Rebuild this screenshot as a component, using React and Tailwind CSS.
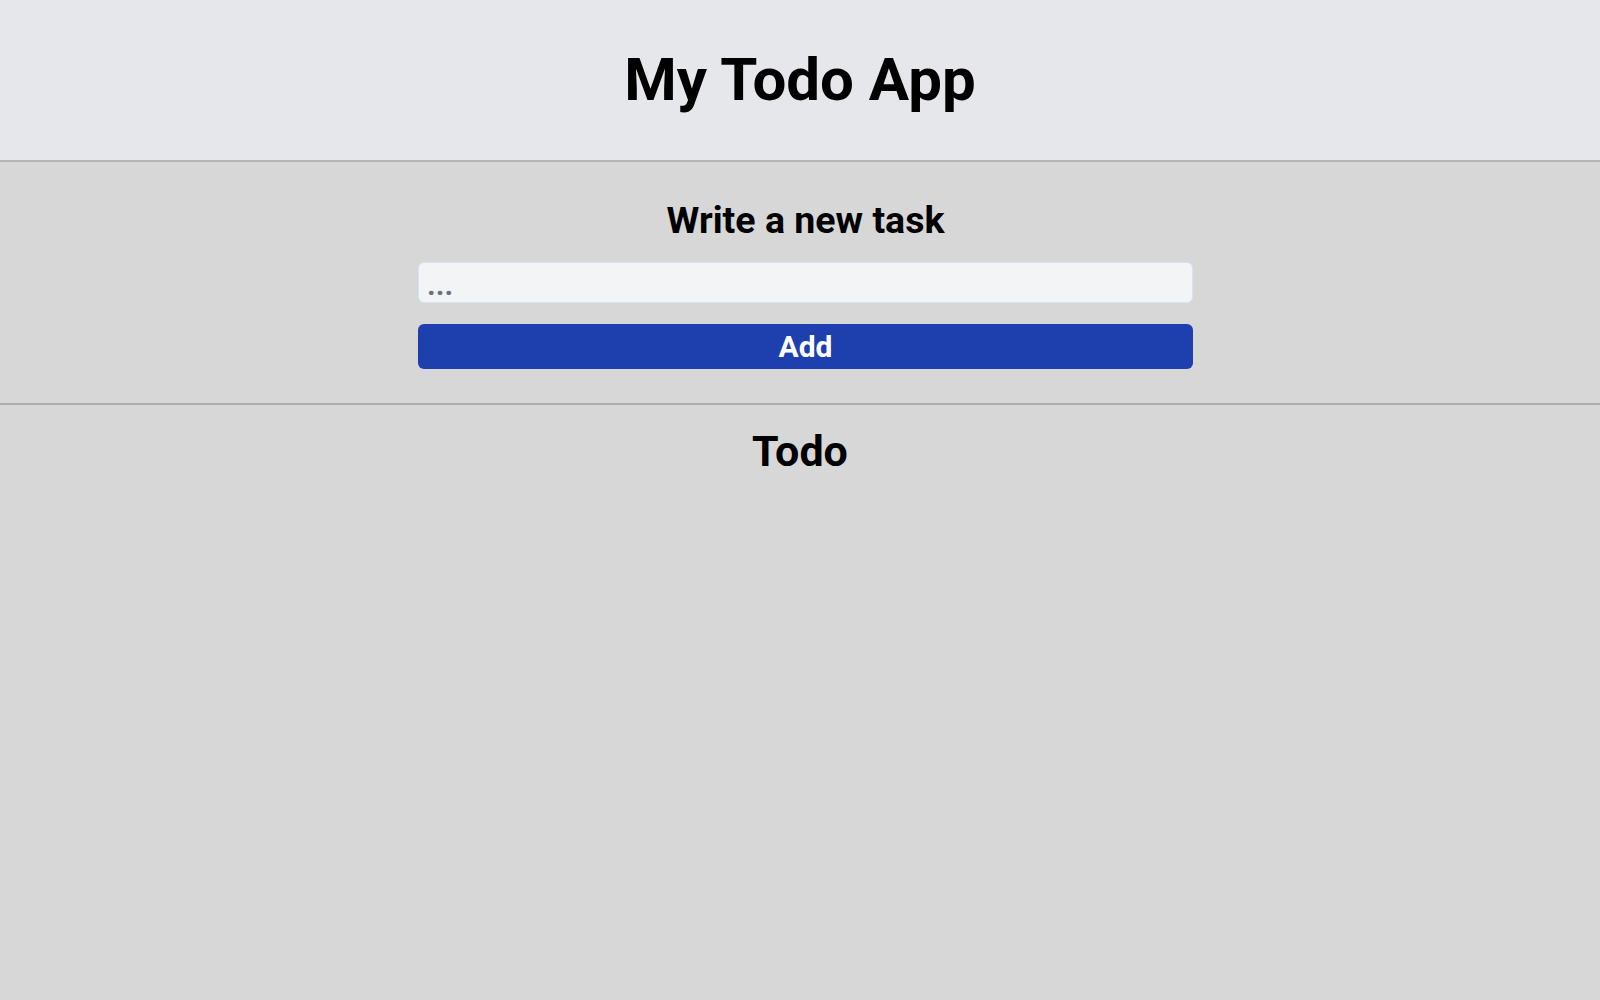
import React, { useState } from 'react';

// Simple todo page: title bar, new-task form, and the (empty) todo list.
export default function App() {
  const [task, setTask] = useState('');
  const [todos, setTodos] = useState([]);

  const addTask = () => {
    if (!task.trim()) return;
    setTodos([...todos, task.trim()]);
    setTask('');
  };

  return (
    <div className="min-h-screen bg-[#d7d7d7] font-['Roboto',sans-serif] text-black">
      {/* Header */}
      <header className="h-[162px] bg-[#e5e7eb] border-b-2 border-[#b5b5b5] flex items-center justify-center">
        <h1 className="text-6xl font-bold">My Todo App</h1>
      </header>

      {/* New task form */}
      <section className="border-b-2 border-[#b0b0b0] pt-[34px] pb-[34px] pl-[11px] flex flex-col items-center">
        <h2 className="text-[37.5px] font-bold leading-[48px]">Write a new task</h2>
        <div className="w-[775px] mt-[18px] flex flex-col gap-[21px]">
          <input
            value={task}
            onChange={(e) => setTask(e.target.value)}
            placeholder="..."
            className="h-[41px] w-full rounded-md border border-[#d6e2f5] bg-[#f3f4f6] px-2 pt-1 text-[30px] font-bold placeholder:text-gray-500 outline-none"
          />
          <button
            onClick={addTask}
            className="h-[45px] w-full rounded-md bg-[#1e40af] text-[30px] font-bold text-white"
          >
            Add
          </button>
        </div>
      </section>

      {/* Todo list */}
      <section className="flex flex-col items-center pt-[21px]">
        <h2 className="text-[43px] font-bold leading-[50px]">Todo</h2>
        <ul>
          {todos.map((t, i) => (
            <li key={i} className="text-xl">{t}</li>
          ))}
        </ul>
      </section>
    </div>
  );
}
